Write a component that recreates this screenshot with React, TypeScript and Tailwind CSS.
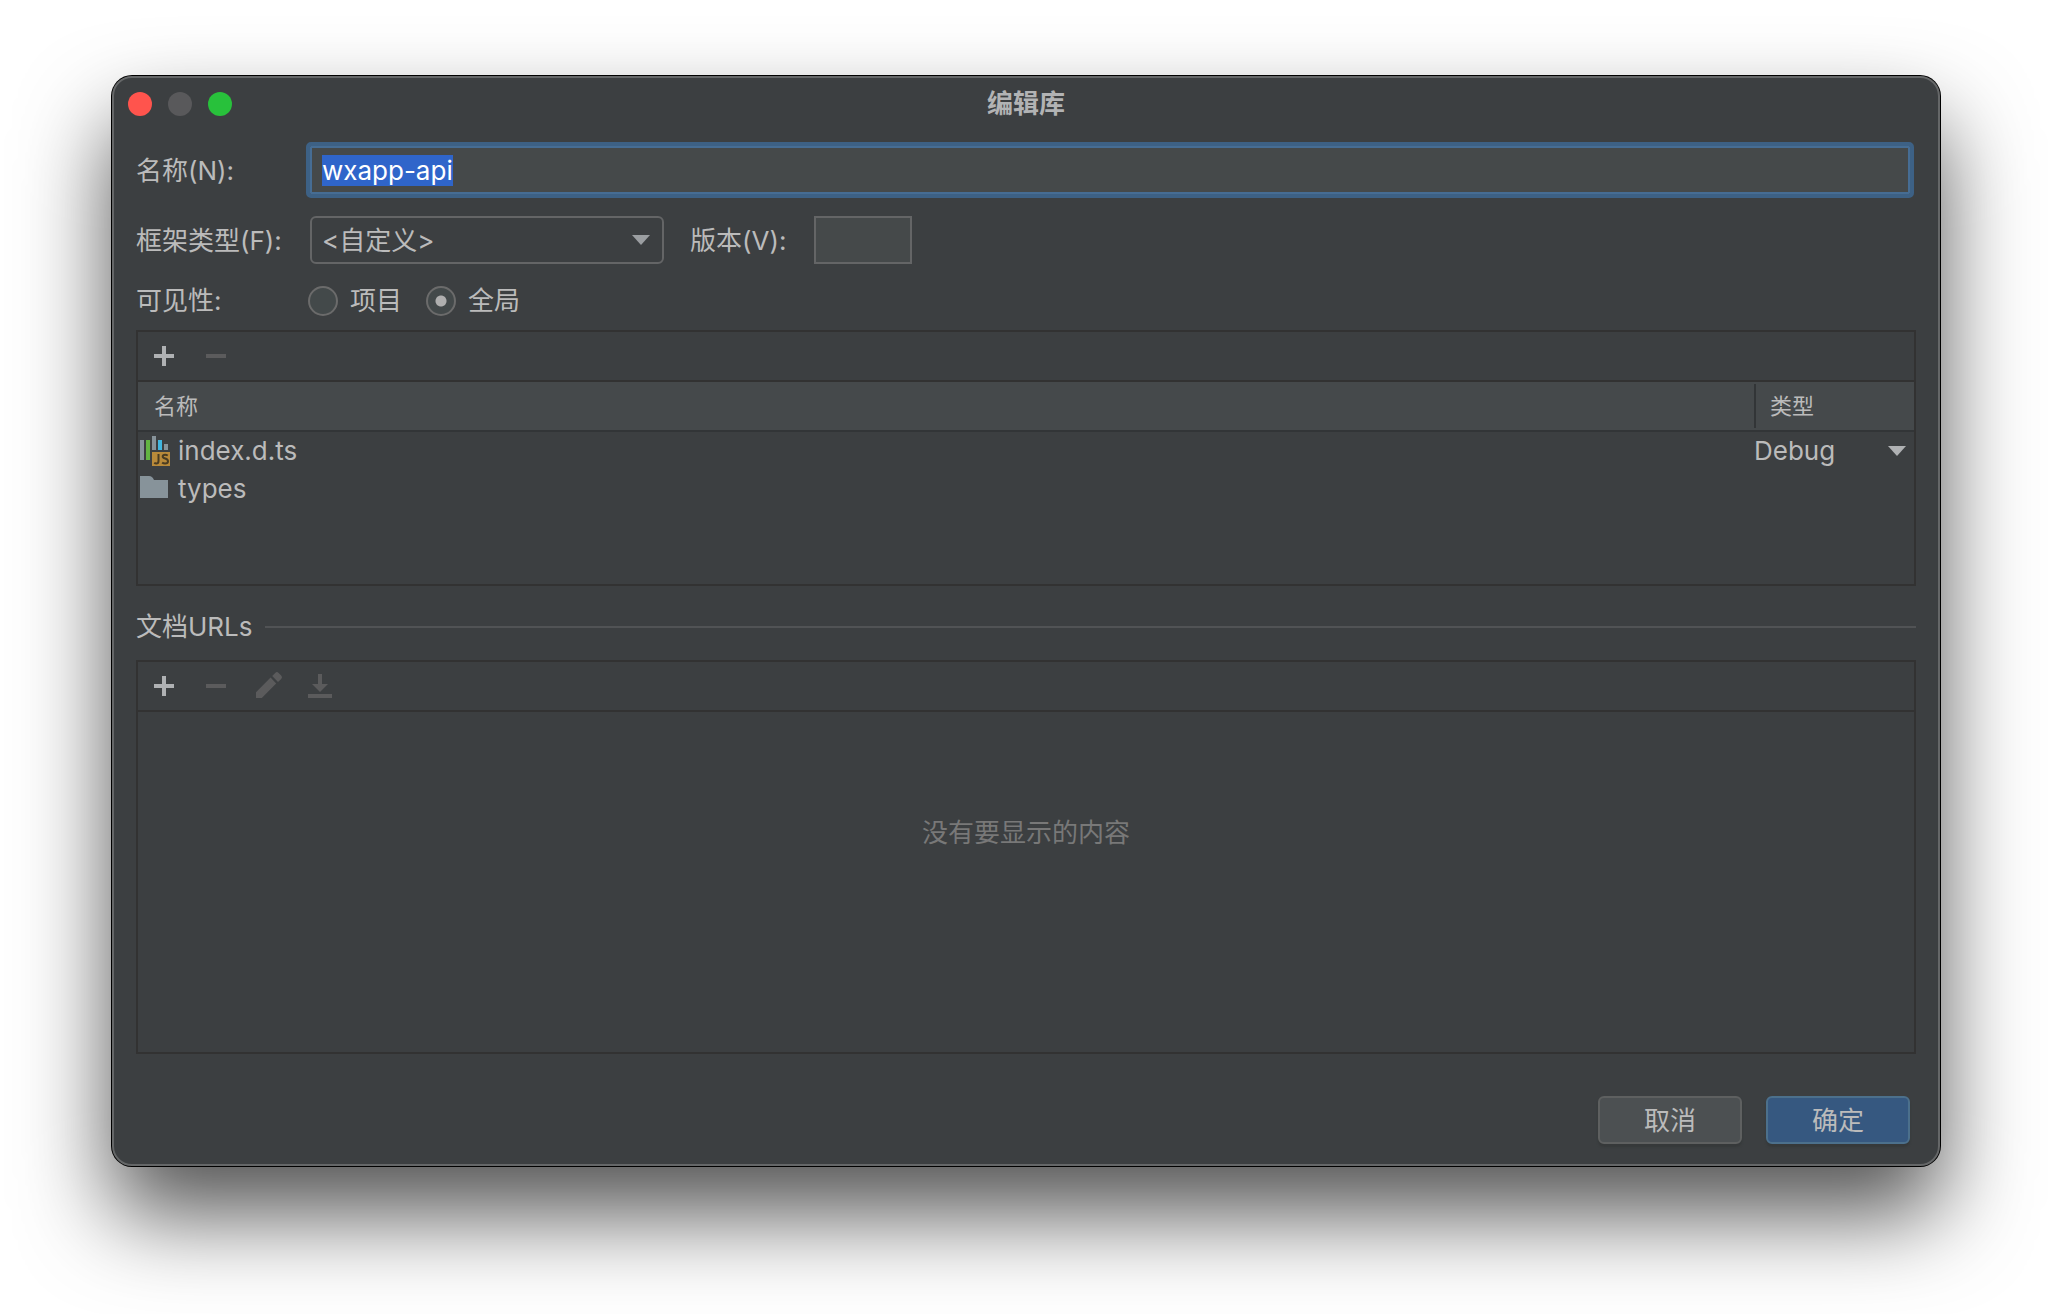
import { useEffect, useRef, useState } from 'react'

type ToolIconProps = { name: 'add' | 'remove' | 'edit' | 'download' }

function ToolIcon({ name }: ToolIconProps) {
  return (
    <svg width="32" height="32" viewBox="0 0 32 32" fill="currentColor" aria-hidden="true">
      {name === 'add' && <path d="M14 6h4v8h8v4h-8v8h-4v-8H6v-4h8z" />}
      {name === 'remove' && <path d="M6 14h20v4H6z" />}
      {name === 'edit' && (
        <path d="M4 22.200 18.600 7.600l5.600 5.800L9.800 28H4zM20.200 6l3-3.100a2.400 2.400 0 0 1 3.400 0l2.600 2.600a2.400 2.400 0 0 1 0 3.400L26 12z" />
      )}
      {name === 'download' && <path d="M14 4h4v10h6l-8 8-8-8h6zM4 24h24v4H4z" />}
    </svg>
  )
}

function ToolButton({ name, label, disabled }: ToolIconProps & { label: string; disabled?: boolean }) {
  return (
    <button
      type="button"
      aria-label={label}
      disabled={disabled}
      className="text-[#afb1b3] disabled:text-[#5b5b5c]"
    >
      <ToolIcon name={name} />
    </button>
  )
}

function Arrow() {
  return (
    <svg width="18" height="10" viewBox="0 0 18 10" fill="currentColor" aria-hidden="true">
      <path d="M0 0h18L9 10z" />
    </svg>
  )
}

// Icono de librería JavaScript
function LibraryIcon() {
  return (
    <svg width="32" height="32" viewBox="0 0 32 32" aria-hidden="true">
      <path fill="#87939a" d="M2 5h4v20H2zM14 1h4v14h-4zM26 9h4v6h-4z" />
      <path fill="#62b543" d="M8 5h4v20H8z" />
      <path fill="#40b6e0" d="M20 5h4v10h-4z" />
      <path fill="#b98a3a" d="M14 17h18v14H14z" />
      <path
        fill="none"
        stroke="#4a3c22"
        strokeWidth="2"
        d="M20.5 19v7q0 2.500-2.200 2.500-1.200 0-2.100-.6M29.800 20.500q-1.300-.8-2.700-.8-2.400 0-2.400 1.700 0 1.400 2.500 2.100 2.800.8 2.800 2.700 0 2.300-2.900 2.300-1.700 0-3-.9"
      />
    </svg>
  )
}

function FolderIcon() {
  return (
    <svg width="32" height="32" viewBox="0 0 32 32" aria-hidden="true">
      <path fill="#87939a" d="M2 3h9c2.500 0 3.500 1 5 4h14v18H2z" />
    </svg>
  )
}

export default function App() {
  const nameRef = useRef<HTMLInputElement>(null)
  const [name, setName] = useState('wxapp-api')
  const [scope, setScope] = useState('global')

  // El nombre aparece seleccionado al abrir el diálogo
  useEffect(() => {
    nameRef.current?.focus()
    nameRef.current?.select()
  }, [])

  return (
    <main className="min-h-screen bg-white px-28 pt-[76px] pb-36 font-['Inter','Noto_Sans_CJK_SC',sans-serif] text-[26px] leading-8 text-[#bbbbbb]">
      <section
        aria-labelledby="titulo"
        className="rounded-[20px] border-2 border-[#656768] bg-[#3c3f41] shadow-[0_0_0_1px_#000,0_48px_90px_rgba(0,0,0,0.68)]"
      >
        {/* Barra de título */}
        <header className="grid h-[52px] grid-cols-[1fr_auto_1fr] items-center px-3.5">
          <div className="flex gap-4">
            <button type="button" aria-label="关闭" className="size-6 rounded-full bg-[#ff544d]" />
            <button type="button" aria-label="最小化" disabled className="size-6 rounded-full bg-[#59595b]" />
            <button type="button" aria-label="缩放" className="size-6 rounded-full bg-[#28c13b]" />
          </div>
          <h1 id="titulo" className="font-bold text-[#b2b3b4]">编辑库</h1>
        </header>

        <form className="px-[22px] pt-4 pb-5" onSubmit={(e) => e.preventDefault()}>
          {/* Nombre */}
          <div className="flex items-center pr-1.5">
            <label htmlFor="name" className="w-[174px] shrink-0 pt-0.5">名称(N):</label>
            <input
              id="name"
              ref={nameRef}
              value={name}
              onChange={(e) => setName(e.target.value)}
              className="h-12 min-w-0 flex-1 rounded-[1px] border-2 border-[#466d94] bg-[#45494a] px-2.5 outline-4 outline-[#3d6185] selection:bg-[#2f65ca] selection:text-white"
            />
          </div>

          {/* Tipo de framework y versión */}
          <div className="mt-[22px] flex items-center">
            <label htmlFor="framework" className="w-[174px] shrink-0 pt-0.5">框架类型(F):</label>
            <div className="relative w-[354px]">
              <select
                id="framework"
                className="h-12 w-full appearance-none rounded-md border-2 border-[#646566] bg-[#3c3f41] px-2.5 pt-0.5"
              >
                <option>&lt;自定义&gt;</option>
              </select>
              <span className="pointer-events-none absolute inset-y-0 right-3.5 flex items-center text-[#9b9ea1]">
                <Arrow />
              </span>
            </div>
            <label htmlFor="version" className="ml-[26px] w-[124px] pt-0.5">版本(V):</label>
            <input id="version" className="h-12 w-[98px] border-2 border-[#646566] bg-[#45494a] px-2" />
          </div>

          {/* Visibilidad */}
          <div role="radiogroup" aria-labelledby="visibility" className="mt-[21px] flex items-center">
            <span id="visibility" className="w-[172px]">可见性:</span>
            <label className="mr-6 flex items-center gap-3">
              <input
                type="radio"
                name="scope"
                checked={scope === 'project'}
                onChange={() => setScope('project')}
                className="size-[30px] appearance-none rounded-full border-2 border-[#6b6b6b] bg-[#43494a] checked:bg-[radial-gradient(circle,#afafaf_5px,#43494a_6px)]"
              />
              项目
            </label>
            <label className="flex items-center gap-3">
              <input
                type="radio"
                name="scope"
                checked={scope === 'global'}
                onChange={() => setScope('global')}
                className="size-[30px] appearance-none rounded-full border-2 border-[#6b6b6b] bg-[#43494a] checked:bg-[radial-gradient(circle,#afafaf_5px,#43494a_6px)]"
              />
              全局
            </label>
          </div>

          {/* Archivos de la librería */}
          <div className="mt-[13px] border-2 border-[#323232]">
            <div className="flex h-[50px] items-center gap-5 border-b-2 border-[#323232] px-2.5">
              <ToolButton name="add" label="添加" />
              <ToolButton name="remove" label="移除" disabled />
            </div>
            <div className="min-h-[202px]">
              <table className="w-full table-fixed border-separate border-spacing-0 text-left">
                <thead className="bg-[#45494b] text-[22px]">
                  <tr>
                    <th className="h-[50px] border-b-2 border-[#323537] p-0 pl-4 font-normal">名称</th>
                    <th className="w-40 border-b-2 border-[#323537] p-0 font-normal">
                      <div className="h-11 border-l-2 border-[#323537] pl-3.5 leading-[44px]">类型</div>
                    </th>
                  </tr>
                </thead>
                <tbody>
                  <tr>
                    <td className="h-[38px] p-0">
                      <div className="flex items-center gap-2">
                        <LibraryIcon />
                        index.d.ts
                      </div>
                    </td>
                    <td className="p-0">
                      <div className="relative flex">
                        <select aria-label="类型" className="h-8 w-full appearance-none bg-[#3c3f41]">
                          <option>Debug</option>
                          <option>Release</option>
                        </select>
                        <span className="pointer-events-none absolute inset-y-0 right-2 flex items-center text-[#afb1b3]">
                          <Arrow />
                        </span>
                      </div>
                    </td>
                  </tr>
                  <tr>
                    <td className="h-[38px] p-0">
                      <div className="flex items-center gap-2">
                        <FolderIcon />
                        types
                      </div>
                    </td>
                    <td className="p-0" />
                  </tr>
                </tbody>
              </table>
            </div>
          </div>

          {/* URLs de documentación */}
          <div className="mt-[25px] flex items-center gap-3">
            <h2>文档URLs</h2>
            <div className="h-0.5 flex-1 bg-[#515355]" />
          </div>
          <div className="mt-[17px] border-2 border-[#323232]">
            <div className="flex h-[50px] items-center gap-5 border-b-2 border-[#323232] px-2.5">
              <ToolButton name="add" label="添加" />
              <ToolButton name="remove" label="移除" disabled />
              <ToolButton name="edit" label="编辑" disabled />
              <ToolButton name="download" label="下载" disabled />
            </div>
            <p className="min-h-[340px] pt-[105px] text-center text-[#787878]">没有要显示的内容</p>
          </div>

          {/* Botones */}
          <div className="mt-[42px] flex justify-end gap-6 pr-1.5">
            <button
              type="button"
              className="h-12 w-36 rounded-md border-2 border-[#5e6060] bg-[#4c5052] pt-0.5 shadow-[0_3px_2px_#36393a]"
            >
              取消
            </button>
            <button
              type="submit"
              className="h-12 w-36 rounded-md border-2 border-[#4c708c] bg-[#365880] pt-0.5 shadow-[0_3px_2px_#36393a]"
            >
              确定
            </button>
          </div>
        </form>
      </section>
    </main>
  )
}
